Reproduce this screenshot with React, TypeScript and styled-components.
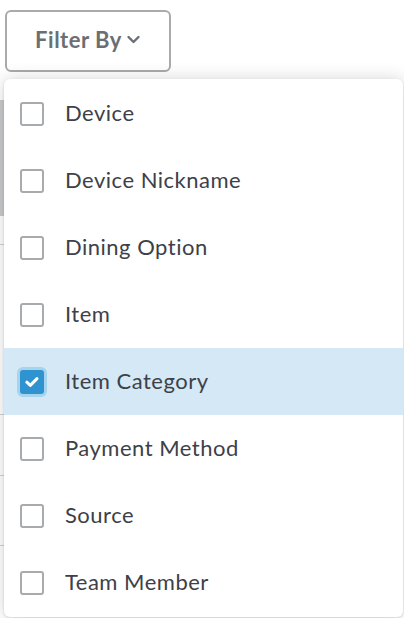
import React from "react";
import styled, { createGlobalStyle } from "styled-components";

const Global = createGlobalStyle`
  html, body { margin: 0; padding: 0; background: #ffffff; }
  body { font-family: Lato, "Open Sans", sans-serif; }
`;

const Page = styled.div`
  position: relative;
  width: 404px;
  height: 618px;
  overflow: hidden;
  background: #ffffff;
`;

const Toolbar = styled.div`
  display: flex;
  padding: 10px 0 0 5px;
`;

const FilterButton = styled.button`
  display: flex;
  align-items: center;
  justify-content: center;
  gap: 4px;
  width: 166px;
  height: 62px;
  box-sizing: border-box;
  border: 2px solid #a8aaad;
  border-radius: 6px;
  background: #ffffff;
  color: #6b6f74;
  font-family: Lato, "Open Sans", sans-serif;
  font-weight: 700;
  font-size: 22px;
  letter-spacing: 0.5px;
  padding: 0 0 3px 0;
  cursor: pointer;
`;

const Backdrop = styled.div`
  display: flex;
  flex-direction: column;
  margin-top: 28px;
`;

const GreyTile = styled.div`
  height: 116px;
  margin-right: 396px;
  background: #c9cbcd;
`;

const Spacer = styled.div<{ h: number }>`
  height: ${(p) => p.h}px;
  border-bottom: 1px solid #cfd1d3;
  margin-right: 390px;
`;

const Menu = styled.div`
  position: absolute;
  left: 4px;
  top: 79px;
  width: 399px;
  height: 538px;
  background: #ffffff;
  border-radius: 6px;
  box-shadow: 0 0 18px rgba(0, 0, 0, 0.16), 0 1px 3px rgba(0, 0, 0, 0.12);
  display: flex;
  flex-direction: column;
  padding-top: 1px;
  box-sizing: border-box;
  overflow: hidden;
`;

const Row = styled.label<{ $active?: boolean }>`
  display: flex;
  align-items: center;
  gap: 21px;
  height: 67px;
  flex: 0 0 67px;
  box-sizing: border-box;
  padding: 0 0 3px 16px;
  background: ${(p) => (p.$active ? "#d4e8f5" : "transparent")};
  color: #3d4147;
  font-size: 22px;
  letter-spacing: 0.5px;
  cursor: pointer;
`;

const Box = styled.span<{ $checked?: boolean }>`
  width: 24px;
  height: 24px;
  flex: 0 0 24px;
  margin-top: 3px;
  box-sizing: border-box;
  border-radius: 3px;
  display: flex;
  align-items: center;
  justify-content: center;
  border: ${(p) => (p.$checked ? "none" : "2px solid #a8abae")};
  background: ${(p) => (p.$checked ? "#2f93cf" : "#ffffff")};
  box-shadow: ${(p) => (p.$checked ? "0 0 0 3px #a6d3ee" : "none")};
`;

const items = [
  "Device",
  "Device Nickname",
  "Dining Option",
  "Item",
  "Item Category",
  "Payment Method",
  "Source",
  "Team Member",
];

export default function App() {
  return (
    <Page>
      <Global />
      <Toolbar>
        <FilterButton>
          Filter By
          <svg width="15" height="15" viewBox="0 0 15 15" fill="none">
            <path d="M2.5 5 L7.5 10 L12.5 5" stroke="#6b6f74" strokeWidth="2.4" strokeLinecap="round" strokeLinejoin="round" />
          </svg>
        </FilterButton>
      </Toolbar>
      <Backdrop>
        <GreyTile />
        <Spacer h={28} />
        <Spacer h={169} />
        <Spacer h={60} />
        <Spacer h={69} />
      </Backdrop>
      <Menu>
        {items.map((label) => {
          const checked = label === "Item Category";
          return (
            <Row key={label} $active={checked}>
              <Box $checked={checked}>
                {checked && (
                  <svg width="18" height="18" viewBox="0 0 18 18" fill="none">
                    <path d="M3.8 9.2 L7.3 12.4 L14 5.6" stroke="#ffffff" strokeWidth="3" strokeLinecap="round" strokeLinejoin="round" />
                  </svg>
                )}
              </Box>
              {label}
            </Row>
          );
        })}
      </Menu>
    </Page>
  );
}
